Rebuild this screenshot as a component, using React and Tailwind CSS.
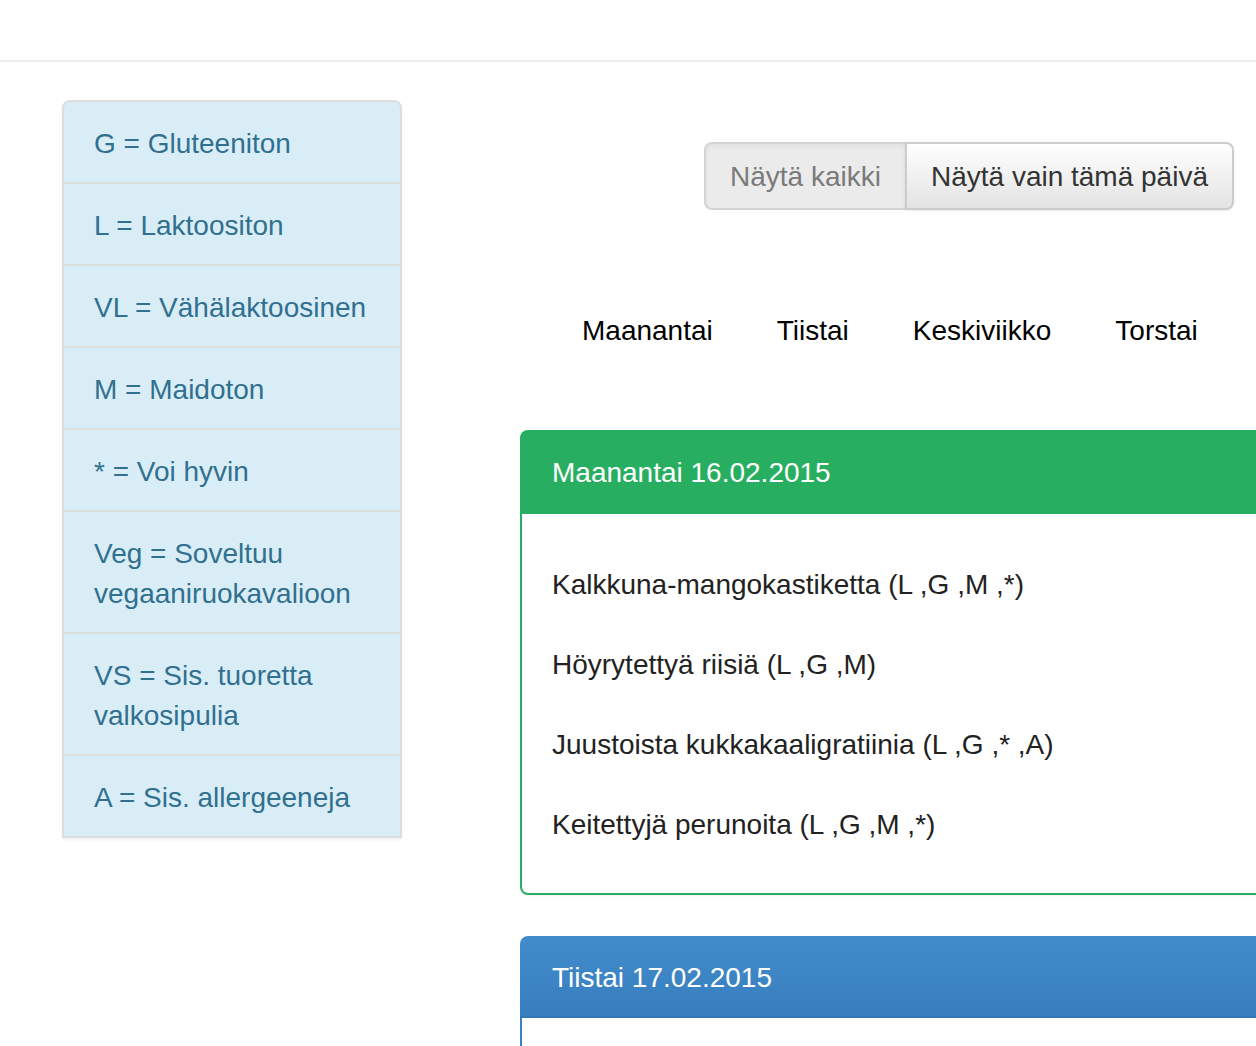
import React from "react";

const legend = [
  "G = Gluteeniton",
  "L = Laktoositon",
  "VL = Vähälaktoosinen",
  "M = Maidoton",
  "* = Voi hyvin",
  "Veg = Soveltuu vegaaniruokavalioon",
  "VS = Sis. tuoretta valkosipulia",
  "A = Sis. allergeeneja",
];

const days = ["Maanantai", "Tiistai", "Keskiviikko", "Torstai"];

const foods = [
  "Kalkkuna-mangokastiketta (L ,G ,M ,*)",
  "Höyrytettyä riisiä (L ,G ,M)",
  "Juustoista kukkakaaligratiinia (L ,G ,* ,A)",
  "Keitettyjä perunoita (L ,G ,M ,*)",
];

export default function App() {
  return (
    <div className="w-[1256px] h-[1046px] overflow-hidden bg-white font-['Liberation_Sans',Arial,sans-serif] text-[28px] leading-[40px] text-[#333333]">
      <div className="h-[62px] border-b-2 border-[#eeeeee]" />
      <div className="flex pl-[62px] pt-[38px]">
        {/* Legend list */}
        <div className="w-[340px] shrink-0 self-start rounded-t-[8px] border-2 border-[#dddddd] bg-[#d9edf7] shadow-[0_2px_3px_rgba(0,0,0,0.06)]">
          {legend.map((t, i) => (
            <div
              key={t}
              className={
                "px-[30px] pt-[22px] pb-[18px] text-[#31708f] " +
                (i > 0 ? "border-t-2 border-[#dddddd]" : "")
              }
            >
              {t}
            </div>
          ))}
        </div>

        {/* Right column */}
        <div className="ml-[118px] w-[714px] shrink-0 pt-[42px]">
          <div className="flex justify-end">
            <div className="flex rounded-[8px]">
              <button className="h-[68px] rounded-l-[8px] border-2 border-r-0 border-[#d4d4d4] bg-[#ebebeb] px-[24px] pt-[2px] text-[#7a7a7a] shadow-[inset_0_3px_5px_rgba(0,0,0,0.04)]">
                Näytä kaikki
              </button>
              <button className="h-[68px] rounded-r-[8px] border-2 border-[#cccccc] bg-gradient-to-b from-white to-[#e3e3e3] px-[24px] pt-[2px] text-[#333333] shadow-[0_1px_2px_rgba(0,0,0,0.08)]">
                Näytä vain tämä päivä
              </button>
            </div>
          </div>

          <nav className="mt-[80px] ml-[32px] flex gap-[4px] whitespace-nowrap">
            {days.map((d) => (
              <span key={d} className="px-[30px] pt-[21px] pb-[19px] text-black">
                {d}
              </span>
            ))}
          </nav>

          <div className="mt-[60px] w-[780px]">
            <div className="rounded-[8px] shadow-[0_1px_2px_rgba(0,0,0,0.06)]">
              <div className="flex h-[84px] items-center rounded-t-[8px] bg-[#28ae61] px-[32px] pt-[2px] text-white">
                Maanantai 16.02.2015
              </div>
              <div className="flex flex-col gap-[40px] rounded-b-[8px] border-2 border-t-0 border-[#28ae61] px-[30px] pt-[51px] pb-[48px]">
                {foods.map((f) => (
                  <div key={f} className="text-[#222222]">
                    {f}
                  </div>
                ))}
              </div>
            </div>

            <div className="mt-[41px] rounded-[8px]">
              <div className="flex h-[82px] items-center rounded-t-[8px] border-b-2 border-[#3278b8] bg-gradient-to-b from-[#438ccb] to-[#367ebd] px-[32px] pt-[4px] text-white">
                Tiistai 17.02.2015
              </div>
              <div className="h-[100px] border-2 border-t-0 border-[#3a80c2]" />
            </div>
          </div>
        </div>
      </div>
    </div>
  );
}
